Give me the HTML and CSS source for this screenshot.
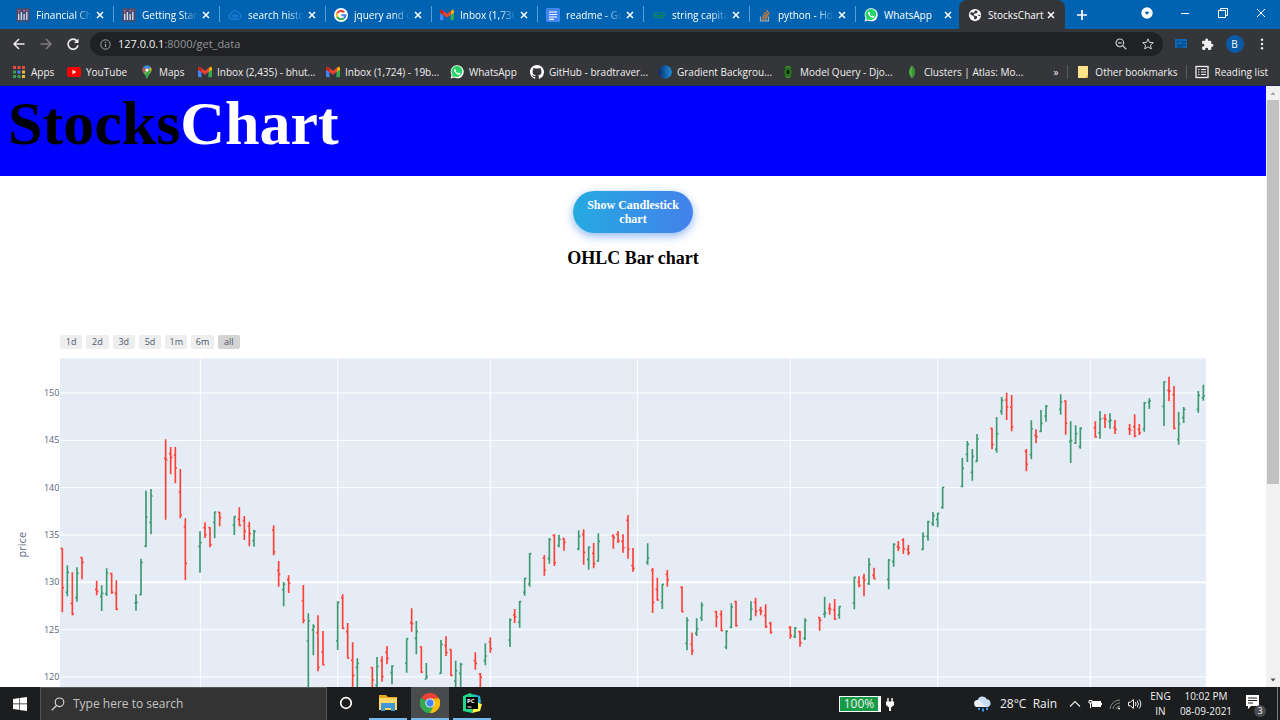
FILE: index.html
```html
<!DOCTYPE html>
<html lang="en">
<head>
<meta charset="utf-8">
<title>StocksChart</title>
<link rel="stylesheet" href="styles.css">
</head>
<body>
<svg class="defs" aria-hidden="true">
  <symbol id="plotly" viewBox="0 0 14 14"><rect width="14" height="14" rx="1" fill="#3f4f75"/><g fill="#d5d9e4"><rect x="2" y="6" width="1.4" height="6"/><rect x="4.7" y="4" width="1.4" height="8"/><rect x="7.4" y="6" width="1.4" height="6"/><rect x="10.1" y="4" width="1.4" height="8"/></g><g fill="#e0647c"><circle cx="2.7" cy="2.7" r=".9"/><circle cx="8.1" cy="2.7" r=".9"/><circle cx="2.7" cy="5" r=".8"/><circle cx="11" cy="2.5" r=".8"/></g></symbol>
  <symbol id="cloud" viewBox="0 0 14 14"><path d="M3.5 11.2a2.9 2.9 0 0 1-.3-5.7 4 4 0 0 1 7.6-.3 3.1 3.1 0 0 1-.2 6z" fill="none" stroke="#2587e4"/><path d="M7 8C5.700 5.800 3.700 7 4.300 8.500S6.300 9.500 7 8s2.500-1.600 2.800 0S8 9.800 7 8" fill="none" stroke="#2587e4"/></symbol>
  <symbol id="google" viewBox="0 0 48 48"><circle cx="24" cy="24" r="24" fill="#fff"/><g fill="none" stroke-width="7"><path d="M35 15A15 15 0 0 0 11 17" stroke="#ea4335"/><path d="M11 17A15 15 0 0 0 11 31" stroke="#fbbc05"/><path d="M11 31A15 15 0 0 0 34 35" stroke="#34a853"/><path d="M34 35A15 15 0 0 0 39 25H25" stroke="#4285f4"/></g></symbol>
  <symbol id="gmail" viewBox="0 0 24 18"><path d="M0 2v14q0 2 2 2h4V7z" fill="#4285f4"/><path d="M24 2v14q0 2-2 2h-4V7z" fill="#34a853"/><path d="M18 3v6l6-4V2.500Q23-1 20 .800z" fill="#fbbc04"/><path d="M0 5V2.500Q1-1 4 .800l8 6 8-6L18 9l-6 4.500L6 9z" fill="#ea4335"/><path d="M0 5V2.500Q.500 0 3 .200L6 3v6z" fill="#c5221f"/></symbol>
  <symbol id="docs" viewBox="0 0 14 14"><rect width="14" height="14" rx="1.500" fill="#4285f4"/><path d="M3 4h8M3 6.500h8M3 9h8M3 11.300h5" stroke="#fff" stroke-width="1.200"/></symbol>
  <symbol id="geeks" viewBox="0 0 14 14"><path d="M1 7.500h12M6.300 5.500A2.600 2.600 0 1 0 6.300 9V7.500M7.700 5.500A2.600 2.600 0 1 1 7.700 9V7.500" fill="none" stroke="#14855f" stroke-width="1.200"/></symbol>
  <symbol id="stack" viewBox="0 0 14 14"><path d="M2.500 8.500v4.300h8V8.500" fill="none" stroke="#a9a9a9" stroke-width="1.200"/><path d="M4 11h5M4.200 8.800l5 .7M4.900 6.500l4.600 2M6.300 4.200l4 3.100M8.600 2l2.700 4.200" stroke="#f48024" stroke-width="1.200"/></symbol>
  <symbol id="whatsapp" viewBox="0 0 24 24"><path d="M1 23l1.600-5.800A11.200 11.200 0 1 1 7 21.500z" fill="#fff"/><path d="M3.500 20.500l1-3.700A9.300 9.300 0 1 1 8 19.500z" fill="#25d366"/><path d="M8 6.500c-2 1-1.500 3.500.5 6s5.500 5 8 4c1.600-.8 1.500-2 1.200-2.500L15 12.700c-1 1.300-1.200 1.500-2 1-1.500-.8-2.700-2-3.200-3.200.8-1 .9-1.300.6-2z" fill="#fff"/></symbol>
  <symbol id="globe" viewBox="0 0 24 24"><circle cx="12" cy="12" r="10.500" fill="#fff"/><path d="M5 7l5 1 3-4 4 2-2 3-5 1v3l5 .500 1 3-3 3-3-1 1-3-4-3-3-1q0-2 1-4.500zM17 11l4 1v2l-4-1z" fill="#35363a"/></symbol>
  <symbol id="close" viewBox="0 0 10 10"><path d="M2 2l6 6M8 2L2 8" stroke="currentColor" stroke-width="1.500" fill="none"/></symbol>
  <symbol id="apps" viewBox="0 0 14 14"><g fill="#e34b43"><rect x="1" y="1" width="3" height="3"/><rect x="5.500" y="1" width="3" height="3"/><rect x="10" y="1" width="3" height="3"/></g><g fill="#37a05a"><rect x="1" y="5.500" width="3" height="3"/><rect x="1" y="10" width="3" height="3"/><rect x="5.500" y="10" width="3" height="3"/></g><rect x="5.500" y="5.500" width="3" height="3" fill="#4285f4"/><g fill="#f2b632"><rect x="10" y="5.500" width="3" height="3"/><rect x="10" y="10" width="3" height="3"/></g></symbol>
  <symbol id="youtube" viewBox="0 0 14 14"><rect y="2" width="14" height="10" rx="2.500" fill="#f00"/><path d="M5.500 4.800v4.400L9.300 7z" fill="#fff"/></symbol>
  <symbol id="maps" viewBox="0 0 14 14"><path d="M2.500 5A4.500 4.500 0 0 1 11.500 5C11.500 8.500 8 9.500 7 14 6 9.500 2.500 8.500 2.500 5" fill="#34a853"/><path d="M2.500 5A4.500 4.500 0 0 1 7 .500L4 8Q2.500 7 2.500 5" fill="#4285f4"/><path d="M3.500 2.200L6 4.500 3.600 7.600Q2 5 3.500 2.200" fill="#ea4335"/><path d="M11.500 5Q11.500 7 8.500 9.800L4.200 8.400 10.600 2.300Q11.500 3.500 11.500 5" fill="#fbbc04"/><path d="M11 7Q8 9.500 7 14 6 10.500 4.700 9l5-5z" fill="#34a853"/><path d="M7 .500q2.500 0 3.800 2L7.500 5 5 2z" fill="#4285f4"/><circle cx="7" cy="5" r="1.600" fill="#fff"/></symbol>
  <symbol id="github" viewBox="0 0 16 16"><path fill="#fff" d="M8 0C3.580 0 0 3.580 0 8c0 3.540 2.290 6.530 5.470 7.590.4.070.55-.17.55-.38 0-.19-.01-.82-.01-1.490-2.010.37-2.530-.49-2.690-.94-.09-.23-.48-.94-.82-1.130-.28-.15-.68-.52-.01-.53.63-.01 1.080.58 1.230.82.72 1.210 1.870.87 2.330.66.07-.52.28-.87.51-1.070-1.780-.2-3.640-.89-3.640-3.950 0-.87.31-1.590.82-2.150-.08-.2-.36-1.020.08-2.120 0 0 .67-.21 2.200.82.64-.18 1.320-.27 2-.27s1.360.09 2 .27c1.530-1.040 2.200-.82 2.200-.82.44 1.100.16 1.920.08 2.120.51.56.82 1.270.82 2.150 0 3.070-1.870 3.750-3.650 3.950.29.25.54.73.54 1.480 0 1.070-.01 1.930-.01 2.200 0 .21.15.46.55.38A8.010 8.010 0 0 0 16 8c0-4.420-3.580-8-8-8"/></symbol>
  <symbol id="gradient" viewBox="0 0 14 14"><linearGradient id="gb"><stop offset="0" stop-color="#0b2c66"/><stop offset="1" stop-color="#1f8fe0"/></linearGradient><circle cx="7" cy="7" r="6.800" fill="url(#gb)"/></symbol>
  <symbol id="query" viewBox="0 0 14 14"><path d="M4.500 3.500Q7-.500 9.500 3.500M4.500 10.500Q7 14.500 9.500 10.500" fill="none" stroke="#2f9a1c" stroke-width="1.500"/><ellipse cx="7" cy="7" rx="3.800" ry="3.600" fill="#1d7d12"/><ellipse cx="7" cy="7" rx="1.500" ry="1.900" fill="#111"/></symbol>
  <symbol id="leaf" viewBox="0 0 14 14"><path d="M7 .500Q10.500 4 10 8 9.500 11 7 13.500 4.500 11 4 8 3.500 4 7 .500" fill="#4faa41"/><path d="M7 .500Q10.500 4 10 8 9.500 11 7 13.500z" fill="#3d9130"/></symbol>
  <symbol id="folder" viewBox="0 0 14 14"><path d="M2 1h10v12H2z" fill="#ffe38a"/><path d="M9 13l3-3v3z" fill="#e2b63e"/></symbol>
  <symbol id="list" viewBox="0 0 14 14"><rect x="1" y="1.500" width="12" height="11" fill="none" stroke="#eee" stroke-width="1.300"/><path d="M3 4.500h1.500M6 4.500h5M3 7h1.500M6 7h5M3 9.500h1.500M6 9.500h5" stroke="#eee"/></symbol>
</svg>

<nav class="tabs" aria-label="Tabs">
  <div class="tab"><svg class="fav"><use href="#plotly"/></svg><span class="title">Financial Charts</span><button class="x" aria-label="Close"><svg><use href="#close"/></svg></button></div>
  <div class="tab"><svg class="fav"><use href="#plotly"/></svg><span class="title">Getting Started</span><button class="x" aria-label="Close"><svg><use href="#close"/></svg></button></div>
  <div class="tab"><svg class="fav"><use href="#cloud"/></svg><span class="title">search historical</span><button class="x" aria-label="Close"><svg><use href="#close"/></svg></button></div>
  <div class="tab"><svg class="fav"><use href="#google"/></svg><span class="title">jquery and css</span><button class="x" aria-label="Close"><svg><use href="#close"/></svg></button></div>
  <div class="tab"><svg class="fav"><use href="#gmail"/></svg><span class="title">Inbox (1,736) -</span><button class="x" aria-label="Close"><svg><use href="#close"/></svg></button></div>
  <div class="tab"><svg class="fav"><use href="#docs"/></svg><span class="title">readme - Google</span><button class="x" aria-label="Close"><svg><use href="#close"/></svg></button></div>
  <div class="tab"><svg class="fav"><use href="#geeks"/></svg><span class="title">string capitalize</span><button class="x" aria-label="Close"><svg><use href="#close"/></svg></button></div>
  <div class="tab"><svg class="fav"><use href="#stack"/></svg><span class="title">python - How to</span><button class="x" aria-label="Close"><svg><use href="#close"/></svg></button></div>
  <div class="tab"><svg class="fav"><use href="#whatsapp"/></svg><span class="title full">WhatsApp</span><button class="x" aria-label="Close"><svg><use href="#close"/></svg></button></div>
  <div class="tab active"><svg class="fav"><use href="#globe"/></svg><span class="title full">StocksChart</span><button class="x" aria-label="Close"><svg><use href="#close"/></svg></button></div>
  <button class="newtab" aria-label="New tab"><svg width="12" height="12" viewBox="0 0 12 12"><path d="M6 1v10M1 6h10" stroke="#fff" stroke-width="1.700"/></svg></button>
  <div class="winctl">
    <button aria-label="Search tabs"><svg width="12" height="12" viewBox="0 0 12 12"><circle cx="6" cy="6" r="5.700" fill="#fff"/><path d="M3.500 4.800h5L6 7.900z" fill="#0063b1"/></svg></button>
    <button aria-label="Minimize"><svg width="10" height="10" viewBox="0 0 10 10"><path d="M1 5.500h8" stroke="#fff"/></svg></button>
    <button aria-label="Restore"><svg width="10" height="10" viewBox="0 0 10 10"><path d="M.500 2.500h7v7h-7zM2.500 2.500v-2h7v7h-2" fill="none" stroke="#fff"/></svg></button>
    <button aria-label="Close window"><svg width="10" height="10" viewBox="0 0 10 10"><path d="M1 1l8 8M9 1L1 9" stroke="#fff"/></svg></button>
  </div>
</nav>

<div class="toolbar">
  <button aria-label="Back"><svg width="12" height="12" viewBox="0 0 12 12"><path d="M11.500 6H1.500M6 1L1 6l5 5" fill="none" stroke="#eee" stroke-width="1.500"/></svg></button>
  <button aria-label="Forward"><svg width="12" height="12" viewBox="0 0 12 12"><path d="M.500 6h10M6 1l5 5-5 5" fill="none" stroke="#7d7e81" stroke-width="1.500"/></svg></button>
  <button aria-label="Reload"><svg width="12" height="12" viewBox="0 0 12 12"><path d="M10 3A5 5 0 1 0 11 7.300" fill="none" stroke="#eee" stroke-width="1.600"/><path d="M11.500 .500V5H7z" fill="#eee"/></svg></button>
  <div class="address">
    <svg width="11" height="11" viewBox="0 0 11 11"><circle cx="5.500" cy="5.500" r="4.700" fill="none" stroke="#a0a3a7"/><path d="M5.500 5v3M5.500 2.800v1.200" stroke="#a0a3a7" stroke-width="1.200"/></svg>
    <p class="url"><b>127.0.0.1</b>:8000/get_data</p>
    <button aria-label="Zoom"><svg width="12" height="12" viewBox="0 0 12 12"><circle cx="4.800" cy="4.800" r="3.800" fill="none" stroke="#c8cacd" stroke-width="1.200"/><path d="M3 4.800h3.600M7.600 7.600l3.700 3.700" stroke="#c8cacd" stroke-width="1.300"/></svg></button>
    <button aria-label="Bookmark"><svg width="12" height="12" viewBox="0 0 12 12"><path d="M6 .900l1.500 3.500 3.800.3-2.900 2.500.9 3.700L6 8.900l-3.300 2 .9-3.700L.700 4.700l3.800-.3z" fill="none" stroke="#d4d5d8"/></svg></button>
  </div>
  <button class="ext" aria-label="Tasks"><svg width="12" height="10" viewBox="0 0 12 10"><path d="M0 0h12v9H0z" fill="#0b67b8"/><path d="M1.500 2.500l1 1 1.500-2M6 3h5M2 6h9M2 8h6" fill="none" stroke="#0c3c66"/></svg></button>
  <button class="ext" aria-label="Extensions"><svg width="13" height="13" viewBox="0 0 24 24"><path fill="#f1f1f1" d="M20.500 11H19V7a2 2 0 0 0-2-2h-4V3.500a2.500 2.500 0 0 0-5 0V5H4a2 2 0 0 0-2 2v3.800h1.500a2.700 2.700 0 0 1 0 5.400H2V20a2 2 0 0 0 2 2h3.800v-1.500a2.700 2.700 0 0 1 5.400 0V22H17a2 2 0 0 0 2-2v-4h1.500a2.500 2.500 0 0 0 0-5"/></svg></button>
  <button class="ext"><span class="avatar">B</span></button>
  <button class="ext" aria-label="Menu"><svg width="4" height="12" viewBox="0 0 4 12"><g fill="#eee"><circle cx="2" cy="1.700" r="1.200"/><circle cx="2" cy="6" r="1.200"/><circle cx="2" cy="10.300" r="1.200"/></g></svg></button>
</div>

<nav class="bookmarks" aria-label="Bookmarks">
  <div class="marks">
    <a href="#"><svg><use href="#apps"/></svg>Apps</a>
    <a href="#"><svg><use href="#youtube"/></svg>YouTube</a>
    <a href="#"><svg><use href="#maps"/></svg>Maps</a>
    <a href="#"><svg><use href="#gmail"/></svg>Inbox (2,435) - bhut...</a>
    <a href="#"><svg><use href="#gmail"/></svg>Inbox (1,724) - 19b...</a>
    <a href="#"><svg><use href="#whatsapp"/></svg>WhatsApp</a>
    <a href="#"><svg><use href="#github"/></svg>GitHub - bradtraver...</a>
    <a href="#"><svg><use href="#gradient"/></svg>Gradient Backgrou...</a>
    <a href="#"><svg><use href="#query"/></svg>Model Query - Djo...</a>
    <a href="#"><svg><use href="#leaf"/></svg>Clusters | Atlas: Mo...</a>
  </div>
  <div class="marks-end">
    <button>»</button>
    <a href="#"><svg><use href="#folder"/></svg>Other bookmarks</a>
    <a href="#"><svg><use href="#list"/></svg>Reading list</a>
  </div>
</nav>

<div class="view">
  <main class="page">
    <header class="brand"><h1>Stocks<span>Chart</span></h1></header>
    <button class="switch">Show Candlestick chart</button>
    <h2>OHLC Bar chart</h2>
    <div class="range">
      <button>1d</button><button>2d</button><button>3d</button><button>5d</button><button>1m</button><button>6m</button><button class="on">all</button>
    </div>
    <svg class="chart" viewBox="0 75 3798 1080" role="img" aria-label="OHLC price chart">
      <rect class="plot" x="180" y="100" width="3438" height="1055"/>
      <g id="grid"></g>
      <g id="bars"></g>
      <text class="axis" transform="translate(77 659) rotate(-90)">price</text>
    </svg>
  </main>
  <div class="scroll" aria-hidden="true">
    <svg width="14" height="14" viewBox="0 0 14 14"><path d="M4.500 9L7 6l2.500 3z" fill="#a3a3a3"/></svg>
    <div class="track"><div class="thumb"></div></div>
    <svg width="14" height="14" viewBox="0 0 14 14"><path d="M4.500 5.500L7 8.500l2.500-3z" fill="#505050"/></svg>
  </div>
</div>

<footer class="taskbar">
  <button class="start" aria-label="Start"><svg width="14" height="14" viewBox="0 0 14 14"><path fill="#fff" d="M0 2l6-.9v5.500H0zM6.600 1L14 0v6.600H6.600zM0 7.200h6v5.600L0 12zM6.600 7.200H14V14l-7.400-1z"/></svg></button>
  <label class="search"><svg width="14" height="14" viewBox="0 0 14 14"><circle cx="8.500" cy="5.300" r="4.300" fill="none" stroke="#ddd" stroke-width="1.100"/><path d="M5.500 8.500L.700 13.300" stroke="#ddd" stroke-width="1.200"/></svg><input type="text" placeholder="Type here to search" aria-label="Search"></label>
  <div class="apps">
    <button aria-label="Cortana"><svg width="14" height="14" viewBox="0 0 14 14"><circle cx="7" cy="7" r="5.300" fill="none" stroke="#fff" stroke-width="1.700"/></svg></button>
    <button class="open" aria-label="File Explorer"><svg width="20" height="18" viewBox="0 0 20 18"><path d="M1 1h7l2 2h9v12H1z" fill="#e5a823"/><path d="M1 4h18v12H1z" fill="#ffd766"/><path d="M3 17V9h14v8h-4v-3H7v3z" fill="#3f97d8"/></svg></button>
    <button class="open current" aria-label="Chrome"><svg width="20" height="20" viewBox="0 0 48 48"><path d="M24 24L3.200 12A24 24 0 0 1 44.800 12z" fill="#ea4335"/><path d="M24 24l20.800-12A24 24 0 0 1 24 48z" fill="#fbbc04"/><path d="M24 24v24A24 24 0 0 1 3.200 12z" fill="#34a853"/><path d="M24 13h21.400A24 24 0 0 1 24 48l9.500-18.500z" fill="#fbbc04"/><path d="M14.500 29.500L3.200 12A24 24 0 0 0 24 48l9.500-18.500z" fill="#34a853"/><circle cx="24" cy="24" r="11" fill="#fff"/><circle cx="24" cy="24" r="8.800" fill="#4285f4"/></svg></button>
    <button class="open" aria-label="PyCharm"><svg width="20" height="20" viewBox="0 0 20 20"><path d="M1 3l7-3 5 3-3 17-9-2z" fill="#21d789"/><path d="M11 1l7 2 1 6-3 3z" fill="#21b7d7"/><path d="M13 9l7 2-2 7-8 2z" fill="#fcf84a"/><rect x="4" y="4" width="12" height="12" fill="#000"/><path d="M5.500 14h4" stroke="#fff"/><text x="5" y="10" class="pc">PC</text></svg></button>
  </div>
  <div class="tray">
    <span class="battery">100%</span>
    <svg class="plug" width="8" height="14" viewBox="0 0 8 14"><path d="M2 1v4M6 1v4" stroke="#fff" stroke-width="1.400"/><path d="M0 4.500h8V8L5 10.500V14H3v-3.500L0 8z" fill="#fff"/></svg>
    <svg class="rain" width="18" height="18" viewBox="0 0 18 18"><path d="M4 12a3.500 3.500 0 0 1-.3-7A5 5 0 0 1 13 4.300 4 4 0 0 1 14 12z" fill="#c9dcf2"/><path d="M4 12a3.500 3.500 0 0 1-.3-7q3 0 4.300 3t6 4z" fill="#eaf3fc"/><path d="M5 13v2M9 13.500v3M13 12.500v2.500" stroke="#3d9cee" stroke-width="2"/></svg>
    <span class="temp">28°C&nbsp; Rain</span>
    <div class="icons">
      <svg width="12" height="12" viewBox="0 0 12 12"><path d="M1 8.500l5-5 5 5" fill="none" stroke="#eee" stroke-width="1.100"/></svg>
      <svg width="14" height="12" viewBox="0 0 14 12"><path d="M1 2.500h3v2.500H1zM2.500 5v5" stroke="#fff" fill="none"/><path d="M4 3h9v6H4z" fill="#fff"/><path d="M13.500 5v2" stroke="#fff"/></svg>
      <svg width="12" height="12" viewBox="0 0 12 12"><g fill="none" stroke="#8b8b8b"><path d="M1 11A10 10 0 0 1 11 2"/><path d="M4 11a7 7 0 0 1 7-6"/><path d="M7 11a4 4 0 0 1 4-3"/></g><circle cx="10" cy="10.500" r="1" fill="#fff"/></svg>
      <svg width="14" height="12" viewBox="0 0 14 12"><g fill="none" stroke="#eee"><path d="M.500 4.200h2L5.500 1.500v9L2.500 7.800h-2z"/><path d="M7.300 4q1.400 2 0 4M9.200 2.700q2.400 3.300 0 6.600M11.200 1.500q3.300 4.500 0 9"/></g></svg>
    </div>
    <div class="two lang"><span>ENG</span><span>IN</span></div>
    <div class="two clock"><span>10:02 PM</span><span>08-09-2021</span></div>
    <button class="notes" aria-label="Notifications"><svg width="20" height="20" viewBox="0 0 20 20"><path d="M1 1h13v11H6l-3 3v-3H1z" fill="#fff"/><path d="M3 4h9M3 6.500h9M3 9h5" stroke="#222"/></svg><span class="badge">3</span></button>
  </div>
</footer>
<script src="chart.js"></script>
</body>
</html>
```

FILE: styles.css
```css
* { box-sizing: border-box; }
body { margin: 0; height: 100vh; display: flex; flex-direction: column; overflow: hidden; font: 10px/14px "Open Sans", "Noto Sans", sans-serif; background: #fff; }
button { border: 0; margin: 0; padding: 0; background: none; color: inherit; font: inherit; display: flex; align-items: center; justify-content: center; }
a { color: inherit; text-decoration: none; }
svg { flex: none; display: block; }
.defs { position: absolute; width: 0; height: 0; }

.tabs { display: flex; height: 29px; flex: none; background: #0063b1; color: #fff; padding-left: 8px; }
.tab { flex: 0 1 106px; min-width: 0; display: flex; align-items: center; padding: 0 9px 0 8px; position: relative; }
.tab::after { content: ""; position: absolute; right: 0; top: 6px; width: 1px; height: 16px; background: #5d9dd0; }
.tab:nth-child(9)::after, .tab.active::after { display: none; }
.tab.active { background: #35363a; border-radius: 8px 8px 0 0; margin-left: -3px; padding: 0 9px; }
.fav { width: 14px; height: 14px; margin-right: 6px; }
.title { flex: 1; min-width: 0; overflow: hidden; white-space: nowrap; -webkit-mask-image: linear-gradient(90deg, #000 70%, transparent); mask-image: linear-gradient(90deg, #000 70%, transparent); }
.title.full { overflow: visible; -webkit-mask-image: none; mask-image: none; }
.x { width: 10px; margin-left: 3px; }
.x svg { width: 10px; height: 10px; }
.newtab { width: 34px; }
.winctl { display: flex; margin-left: auto; height: 26px; }
.winctl button { width: 38px; }

.toolbar { display: flex; align-items: center; height: 30px; flex: none; background: #35363a; padding: 0 5px; }
.toolbar > button { width: 27px; height: 27px; }
.address { flex: 1; display: flex; align-items: center; height: 24px; margin: 0 4px; padding: 0 2px 0 10px; background: #202124; border-radius: 12px; }
.address button { width: 27px; }
.url { flex: 1; margin: 0 0 0 7px; font-size: 11px; color: #93969a; }
.url b { font-weight: 400; color: #f1f1f1; }
.avatar { width: 18px; height: 18px; line-height: 18px; border-radius: 9px; background: #0a5aa6; color: #fff; }

.bookmarks { display: flex; height: 27px; flex: none; align-items: center; background: #35363a; color: #f0f0f0; padding: 0 12px; justify-content: space-between; border-bottom: 1px solid #26264a; }
.bookmarks a { display: flex; align-items: center; white-space: nowrap; }
.bookmarks svg { width: 14px; height: 14px; margin-right: 5px; }
.marks { display: grid; grid-template-columns: 55px 73px 58px 128px 124px 80px 128px 123px 124px 120px; }
.marks-end { display: flex; gap: 9px; }
.marks-end a { border-left: 1px solid #5b5c60; padding-left: 8px; }
.marks-end button { margin-right: -4px; padding-right: 4px; }

.view { flex: 1; min-height: 0; display: flex; overflow: hidden; }
.page { flex: 1; min-width: 0; overflow: hidden; font-family: "Liberation Serif", serif; }
.brand { background: #00f; height: 90px; padding: 2px 8px; color: #000; }
.brand h1 { margin: 0; font-size: 62px; line-height: 70px; }
.brand span { color: #fff; }
.switch { width: 120px; height: 42px; margin: 15px auto 0; border-radius: 21px; color: #fff; font-size: 12px; line-height: 14px; font-weight: 700; background: linear-gradient(90deg, #25aae1, #4481eb); box-shadow: 0 3px 10px rgba(65, 132, 234, .6); }
.page h2 { margin: 14px 0 66px; font-size: 18px; line-height: 22px; text-align: center; }
.range { display: flex; gap: 4px; width: 180px; margin-left: 60px; font-family: "Open Sans", sans-serif; color: #4c5a6e; }
.range button { flex: 1; height: 14px; border-radius: 2px; background: #eee; font-size: 9px; }
.range .on { background: #d4d4d4; }
.chart { width: 100%; height: auto; margin-top: 1px; font-family: "Open Sans", sans-serif; fill: #55657c; }
.plot { fill: #e5ecf6; }
.line { stroke: #fff; stroke-width: 3; }
.line.zero { stroke-width: 6; }
.tick { font-size: 27px; text-anchor: end; }
.axis { font-size: 33px; text-anchor: middle; }
.bar { fill: none; stroke-width: 5; }
.up { stroke: #3d9970; }
.down { stroke: #ff4136; }

.scroll { width: 14px; flex: none; display: flex; flex-direction: column; background: #f1f1f1; }
.track { flex: 1; padding: 0 1px; }
.thumb { height: 67%; background: #c1c1c1; }

.taskbar { display: flex; height: 33px; flex: none; background: #1b1d1f; color: #f1f1f1; }
.start { width: 40px; }
.search { width: 287px; display: flex; align-items: center; gap: 8px; padding-left: 10px; background: #333; border: 1px solid #555; border-bottom: 0; }
.search input { flex: 1; min-width: 0; border: 0; padding: 0; background: none; outline: 0; font: 12px/16px "Open Sans", sans-serif; color: #ccc; }
.search input::placeholder { color: #c4c4c4; opacity: 1; }
.apps { display: flex; gap: 4px; }
.apps button { width: 38px; border-bottom: 2px solid transparent; }
.apps .open { border-color: #76b9ed; }
.apps .current { background: #4a4b4d; }
.pc { font: 700 6px "Open Sans", sans-serif; fill: #fff; }
.tray { display: flex; align-items: center; margin-left: auto; border-right: 1px solid #777; margin-right: 2px; }
.battery { width: 42px; height: 16px; border: 1px solid #fff; border-right-width: 3px; background: #169b47; font-size: 12px; line-height: 14px; text-align: center; }
.plug { margin-left: 5px; }
.rain { margin: 0 8px 0 80px; }
.temp { font-size: 12px; white-space: nowrap; width: 69px; }
.icons { display: flex; gap: 7px; }
.two { display: flex; flex-direction: column; align-items: center; line-height: 15px; }
.lang { width: 37px; }
.clock { width: 54px; }
.notes { position: relative; width: 44px; height: 26px; }
.badge { position: absolute; right: 11px; bottom: 0; width: 12px; height: 12px; border-radius: 6px; background: #4a4b4d; font-size: 9px; line-height: 12px; text-align: center; }
```

FILE: chart.js
```js
// Each bar: day offset, high, low, open, close (chart units, y grows downwards).
const series = [
  { top: 0, bars: [
    [0,670,862,670,788],[1,721,814,802,742],[2,742,871,835,867],[3,727,830,818,745],[4,697,763,698,712],
    [7,767,811,793,799],[8,781,858,814,805],[9,730,813,806,744],[10,743,806,746,802],[11,766,855,805,853],
    [15,808,857,834,832],[16,701,811,809,713],[17,497,667,663,576],[18,492,628,592,513],
    [21,343,584,400,404],[22,366,448,386,397],[23,366,475,390,429],[24,432,580,501,570],[25,580,765,605,715],
    [28,619,743,664,653],[29,592,639,608,629],[30,607,667,608,659],[31,560,640,592,561],[32,561,604,562,578],
    [35,574,630,600,575],[36,547,604,583,601],[37,573,645,587,619],[38,590,664,603,626],[39,614,665,647,619],
    [43,601,691,615,681],[44,708,785,736,748],[45,771,844,794,778],[46,751,804,764,775],
    [49,780,895,828,886],[50,865,1140,948,888],[51,898,991,915,904],[52,871,1039,923,1027],[53,918,1021,981,1019],
    [56,829,975,948,832],[57,808,912,818,910]
  ] },
  { top: 465, bars: [
    [58,429,536,455,534],[59,487,640,541,586],[60,535,640,562,550],
    [63,561,640,563,600],[64,531,640,616,559],[65,529,605,542,590],[66,498,553,517,535],[67,556,613,578,558],
    [70,475,578,550,476],[71,385,455,428,431],[72,423,523,475,455],[73,499,579,501,576],[74,549,598,597,590],
    [77,480,581,580,493],[78,469,528,496,518],[79,508,588,509,586],[80,542,640,603,572],[81,548,640,580,553],
    [84,517,569,542,550],[85,579,640,582,592],[86,490,556,542,528],[87,472,518,486,506],
    [91,415,501,480,420],[92,387,429,405,411],[93,363,443,426,365],[94,294,347,337,295],[95,219,320,312,221],
    [98,225,287,234,270],[99,174,251,236,179],[100,163,258,166,248],[101,164,202,197,178],[102,174,212,176,187],
    [105,151,211,207,169],[106,148,254,163,217],[107,199,269,238,202],[108,189,265,220,251],[109,160,245,243,184],
    [112,163,206,168,173],[113,153,189,163,182],[114,163,218,184,203],[115,105,236,121,207],[116,204,275,257,265],
    [119,190,254,247,234],[120,264,399,271,367],[121,293,362,328,360],[122,312,387,366,313],[123,270,320,283,299],
    [126,319,397,322,395],[127,412,511,490,421],[128,458,525,493,512],[129,415,468,460,447],[130,367,423,413,376],
    [133,393,442,395,411],[134,391,453,403,452],[135,451,508,501,454],[136,370,444,442,381],[137,363,440,365,437],
    [140,364,421,419,387],[141,353,409,367,394],[142,380,406,390,394],[143,373,444,407,440],[144,425,461,430,457],
    [148,438,476,443,467],[149,441,474,470,444],[150,453,500,455,488],[151,415,480,475,422],
    [154,411,452,413,421],[155,350,413,402,399],[156,370,404,385,388],[157,357,420,390,417],[158,378,416,405,380],
    [161,290,388,369,292],[162,289,322,306,317],[163,281,349,293,300],[164,234,315,311,254],[165,263,298,286,296],
    [168,237,328,298,240],[169,190,260,245,193],[170,183,213,200,203],[171,175,222,180,207],[172,195,226,209,218],
    [175,157,211,208,169],[176,122,182,169,125]
  ] },
  { top: 75, bars: [
    [177,486,528,520,497],[178,488,532,508,490],[179,411,476,472,412],
    [183,323,412,409,355],[184,273,336,313,283],[185,297,392,367,319],[186,252,336,334,267],
    [189,233,298,235,284],[190,201,308,298,251],[191,141,194,184,151],[192,128,210,150,171],[193,135,244,172,231],
    [196,297,364,304,343],[197,211,328,314,237],[198,238,280,256,260],[199,180,247,244,220],[200,165,215,198,169],
    [203,133,194,178,156],[204,151,254,153,220],[205,214,339,275,272],[206,226,282,279,251],[207,232,296,290,235],
    [210,214,263,233,261],[211,183,266,248,207],[212,192,234,205,208],[213,190,236,214,211],[214,210,252,233,238],
    [217,222,255,237,240],[218,193,262,230,258],[219,222,255,238,248],[220,156,245,237,159],[221,145,177,157,153],
    [224,94,228,169,96],[225,80,154,121,123],[226,108,238,134,235],[227,186,284,269,222],[228,171,219,203,178],
    [231,123,188,178,136],[232,104,152,144,138]
  ] }
];

const months = [601, 1013, 1471, 1912, 2371, 2813, 3271];
let grid = months.map(x => `<path class="line" d="M${x} 100V1155"/>`).join("");
for (let i = 0; i < 7; i++) {
  const price = 150 - i * 5;
  const y = 204 + i * 142;
  grid += `<path class="line${price === 130 ? " zero" : ""}" d="M180 ${y}H3618"/><text class="tick" x="178" y="${y + 9}">${price}</text>`;
}
document.getElementById("grid").innerHTML = grid;

document.getElementById("bars").innerHTML = series.map(s => s.bars.map(([day, high, low, open, close]) => {
  const x = Math.round(187 + day * 14.755);
  const dir = close < open ? "up" : "down";
  return `<path class="bar ${dir}" d="M${x} ${high + s.top}V${low + s.top}M${x - 5} ${open + s.top}H${x}M${x} ${close + s.top}H${x + 5}"/>`;
}).join("")).join("");
```
